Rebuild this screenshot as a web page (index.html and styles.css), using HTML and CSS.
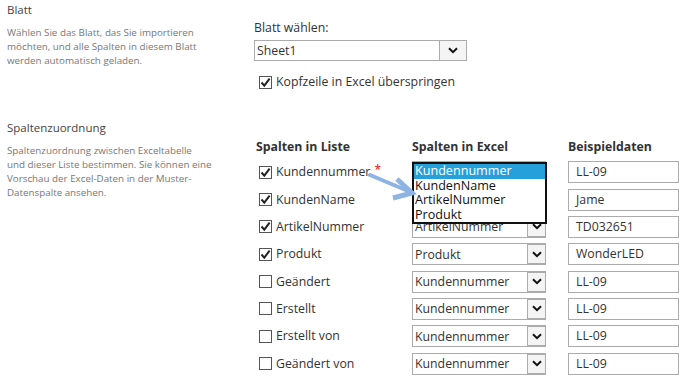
FILE: index.html
```html
<!DOCTYPE html>
<html lang="de">
<head>
<meta charset="utf-8">
<link rel="stylesheet" href="styles.css">
</head>
<body>
<div class="page">
  <section class="sec sec1">
    <div class="info">
      <div class="title">Blatt</div>
      <p class="desc">Wählen Sie das Blatt, das Sie importieren<br>möchten, und alle Spalten in diesem Blatt<br>werden automatisch geladen.</p>
    </div>
    <div class="ctrl">
      <div class="lbl">Blatt wählen:</div>
      <div class="select wide"><span class="val">Sheet1</span><span class="arr"><svg width="10" height="7" viewBox="0 0 10 7"><path d="M1 1.2 L5 5.2 L9 1.2" fill="none" stroke="#111" stroke-width="2"/></svg></span></div>
      <label class="chk top"><span class="box"><svg width="11" height="11" viewBox="0 0 11 11"><path d="M1.5 5.5 L4.3 8.6 L9.6 1.6" fill="none" stroke="#222" stroke-width="2"/></svg></span>Kopfzeile in Excel überspringen</label>
    </div>
  </section>

  <section class="sec sec2">
    <div class="info">
      <div class="title">Spaltenzuordnung</div>
      <p class="desc">Spaltenzuordnung zwischen Exceltabelle<br>und dieser Liste bestimmen. Sie können eine<br>Vorschau der Excel-Daten in der Muster-<br>Datenspalte ansehen.</p>
    </div>
    <div class="map">
      <div class="grid">
        <div class="hd">Spalten in Liste</div>
        <div class="hd">Spalten in Excel</div>
        <div class="hd">Beispieldaten</div>

        <label class="chk"><span class="box"><svg width="11" height="11" viewBox="0 0 11 11"><path d="M1.5 5.5 L4.3 8.6 L9.6 1.6" fill="none" stroke="#222" stroke-width="2"/></svg></span>Kundennummer<span class="req">*</span></label>
        <div class="cell sel-cell">
          <div class="select covered"><span class="val">Kundennummer</span><span class="arr"></span></div>
          <ul class="dropdown">
            <li class="on">Kundennummer</li>
            <li>KundenName</li>
            <li>ArtikelNummer</li>
            <li>Produkt</li>
          </ul>
        </div>
        <div class="input">LL-09</div>

        <label class="chk"><span class="box"><svg width="11" height="11" viewBox="0 0 11 11"><path d="M1.5 5.5 L4.3 8.6 L9.6 1.6" fill="none" stroke="#222" stroke-width="2"/></svg></span>KundenName</label>
        <div class="select covered"><span class="val">KundenName</span><span class="arr"></span></div>
        <div class="input">Jame</div>

        <label class="chk"><span class="box"><svg width="11" height="11" viewBox="0 0 11 11"><path d="M1.5 5.5 L4.3 8.6 L9.6 1.6" fill="none" stroke="#222" stroke-width="2"/></svg></span>ArtikelNummer</label>
        <div class="select"><span class="val">ArtikelNummer</span><span class="arr"><svg width="10" height="7" viewBox="0 0 10 7"><path d="M1 1.2 L5 5.2 L9 1.2" fill="none" stroke="#111" stroke-width="2"/></svg></span></div>
        <div class="input">TD032651</div>

        <label class="chk"><span class="box"><svg width="11" height="11" viewBox="0 0 11 11"><path d="M1.5 5.5 L4.3 8.6 L9.6 1.6" fill="none" stroke="#222" stroke-width="2"/></svg></span>Produkt</label>
        <div class="select"><span class="val">Produkt</span><span class="arr"><svg width="10" height="7" viewBox="0 0 10 7"><path d="M1 1.2 L5 5.2 L9 1.2" fill="none" stroke="#111" stroke-width="2"/></svg></span></div>
        <div class="input">WonderLED</div>

        <label class="chk"><span class="box"></span>Geändert</label>
        <div class="select"><span class="val">Kundennummer</span><span class="arr"><svg width="10" height="7" viewBox="0 0 10 7"><path d="M1 1.2 L5 5.2 L9 1.2" fill="none" stroke="#111" stroke-width="2"/></svg></span></div>
        <div class="input">LL-09</div>

        <label class="chk"><span class="box"></span>Erstellt</label>
        <div class="select"><span class="val">Kundennummer</span><span class="arr"><svg width="10" height="7" viewBox="0 0 10 7"><path d="M1 1.2 L5 5.2 L9 1.2" fill="none" stroke="#111" stroke-width="2"/></svg></span></div>
        <div class="input">LL-09</div>

        <label class="chk"><span class="box"></span>Erstellt von</label>
        <div class="select"><span class="val">Kundennummer</span><span class="arr"><svg width="10" height="7" viewBox="0 0 10 7"><path d="M1 1.2 L5 5.2 L9 1.2" fill="none" stroke="#111" stroke-width="2"/></svg></span></div>
        <div class="input">LL-09</div>

        <label class="chk"><span class="box"></span>Geändert von</label>
        <div class="select"><span class="val">Kundennummer</span><span class="arr"><svg width="10" height="7" viewBox="0 0 10 7"><path d="M1 1.2 L5 5.2 L9 1.2" fill="none" stroke="#111" stroke-width="2"/></svg></span></div>
        <div class="input">LL-09</div>
      </div>
      <svg class="pointer" width="50" height="32" viewBox="0 0 50 32">
        <path d="M2 3 L40 19" stroke="#8db4e2" stroke-width="4" stroke-linecap="round" fill="none"/>
        <path d="M29 7 L44 21 L25 26" stroke="#8db4e2" stroke-width="5" stroke-linejoin="miter" fill="none"/>
      </svg>
    </div>
  </section>
</div>
</body>
</html>
```
FILE: styles.css
```css
* { box-sizing: border-box; }
html, body { margin: 0; padding: 0; background: #fff; }
body {
  font-family: "Open Sans", "Noto Sans", sans-serif;
  color: #333;
  width: 688px;
  height: 377px;
  overflow: hidden;
}
.page { padding-left: 7px; }
.sec {
  display: grid;
  grid-template-columns: 247px 1fr;
}
.title {
  font-size: 11.5px;
  line-height: 16px;
  color: #444;
}
.desc {
  margin: 8px 0 0;
  font-size: 9.8px;
  line-height: 14px;
  color: #777;
  white-space: nowrap;
}
.sec1 .info { padding-top: 2px; }
.ctrl { padding-top: 19px; }
.lbl { font-size: 12.3px; line-height: 18px; color: #333; }

.select {
  position: relative;
  display: flex;
  align-items: center;
  width: 134px;
  height: 22px;
  border: 1px solid #ababab;
  background: #fff;
  font-size: 12.3px;
  color: #333;
  padding-left: 2px;
}
.select.covered .val { visibility: hidden; }
.select.wide { width: 213px; margin-top: 3px; height: 21px; }
.select .val { flex: 1; white-space: nowrap; overflow: hidden; }
.select .arr {
  width: 19px;
  height: 20px;
  margin: -1px -1px -1px 0;
  border: 1px solid #ababab;
  background: #f4f4f4;
  display: flex;
  align-items: center;
  justify-content: center;
}
.select.wide .arr { width: 28px; height: 21px; margin: -1px -1px -1px 0; }

.chk {
  display: flex;
  align-items: center;
  font-size: 12.3px;
  line-height: 18px;
  color: #333;
  white-space: nowrap;
}
.chk.top { margin-top: 12px; padding-left: 5px; }
.box {
  width: 13px;
  height: 13px;
  border: 1px solid #555;
  margin-right: 4px;
  display: flex;
  align-items: center;
  justify-content: center;
  background: #fff;
}
.req { color: #e00; margin-left: 4px; font-size: 12px; position: relative; top: -2px; }

.sec2 { margin-top: 29px; }
.map { position: relative; padding-top: 18px; }
.grid {
  display: grid;
  grid-template-columns: 156px 156px 111px;
  grid-template-rows: 18px;
  grid-auto-rows: 22px;
  row-gap: 5.33px;
  margin-left: 2px;
}
.grid .chk { padding-left: 3px; }
.hd {
  font-weight: 700;
  font-size: 12.3px;
  line-height: 18px;
  color: #333;
}
.input {
  width: 111px;
  height: 22px;
  border: 1px solid #ababab;
  font-size: 12.3px;
  line-height: 20px;
  padding-left: 7px;
  color: #333;
}
.sel-cell { position: relative; }
.dropdown {
  position: absolute;
  left: 0;
  top: 1px;
  z-index: 5;
  width: 135px;
  margin: 0;
  padding: 0;
  list-style: none;
  border: 2px solid #111;
  background: #fff;
  font-size: 12.6px;
  line-height: 14.5px;
  color: #111;
}
.dropdown li { padding-left: 1px; white-space: nowrap; }
.dropdown li.on { background: #26a0da; color: #fff; }
.pointer {
  position: absolute;
  left: 114px;
  top: 52px;
  z-index: 6;
}
```
